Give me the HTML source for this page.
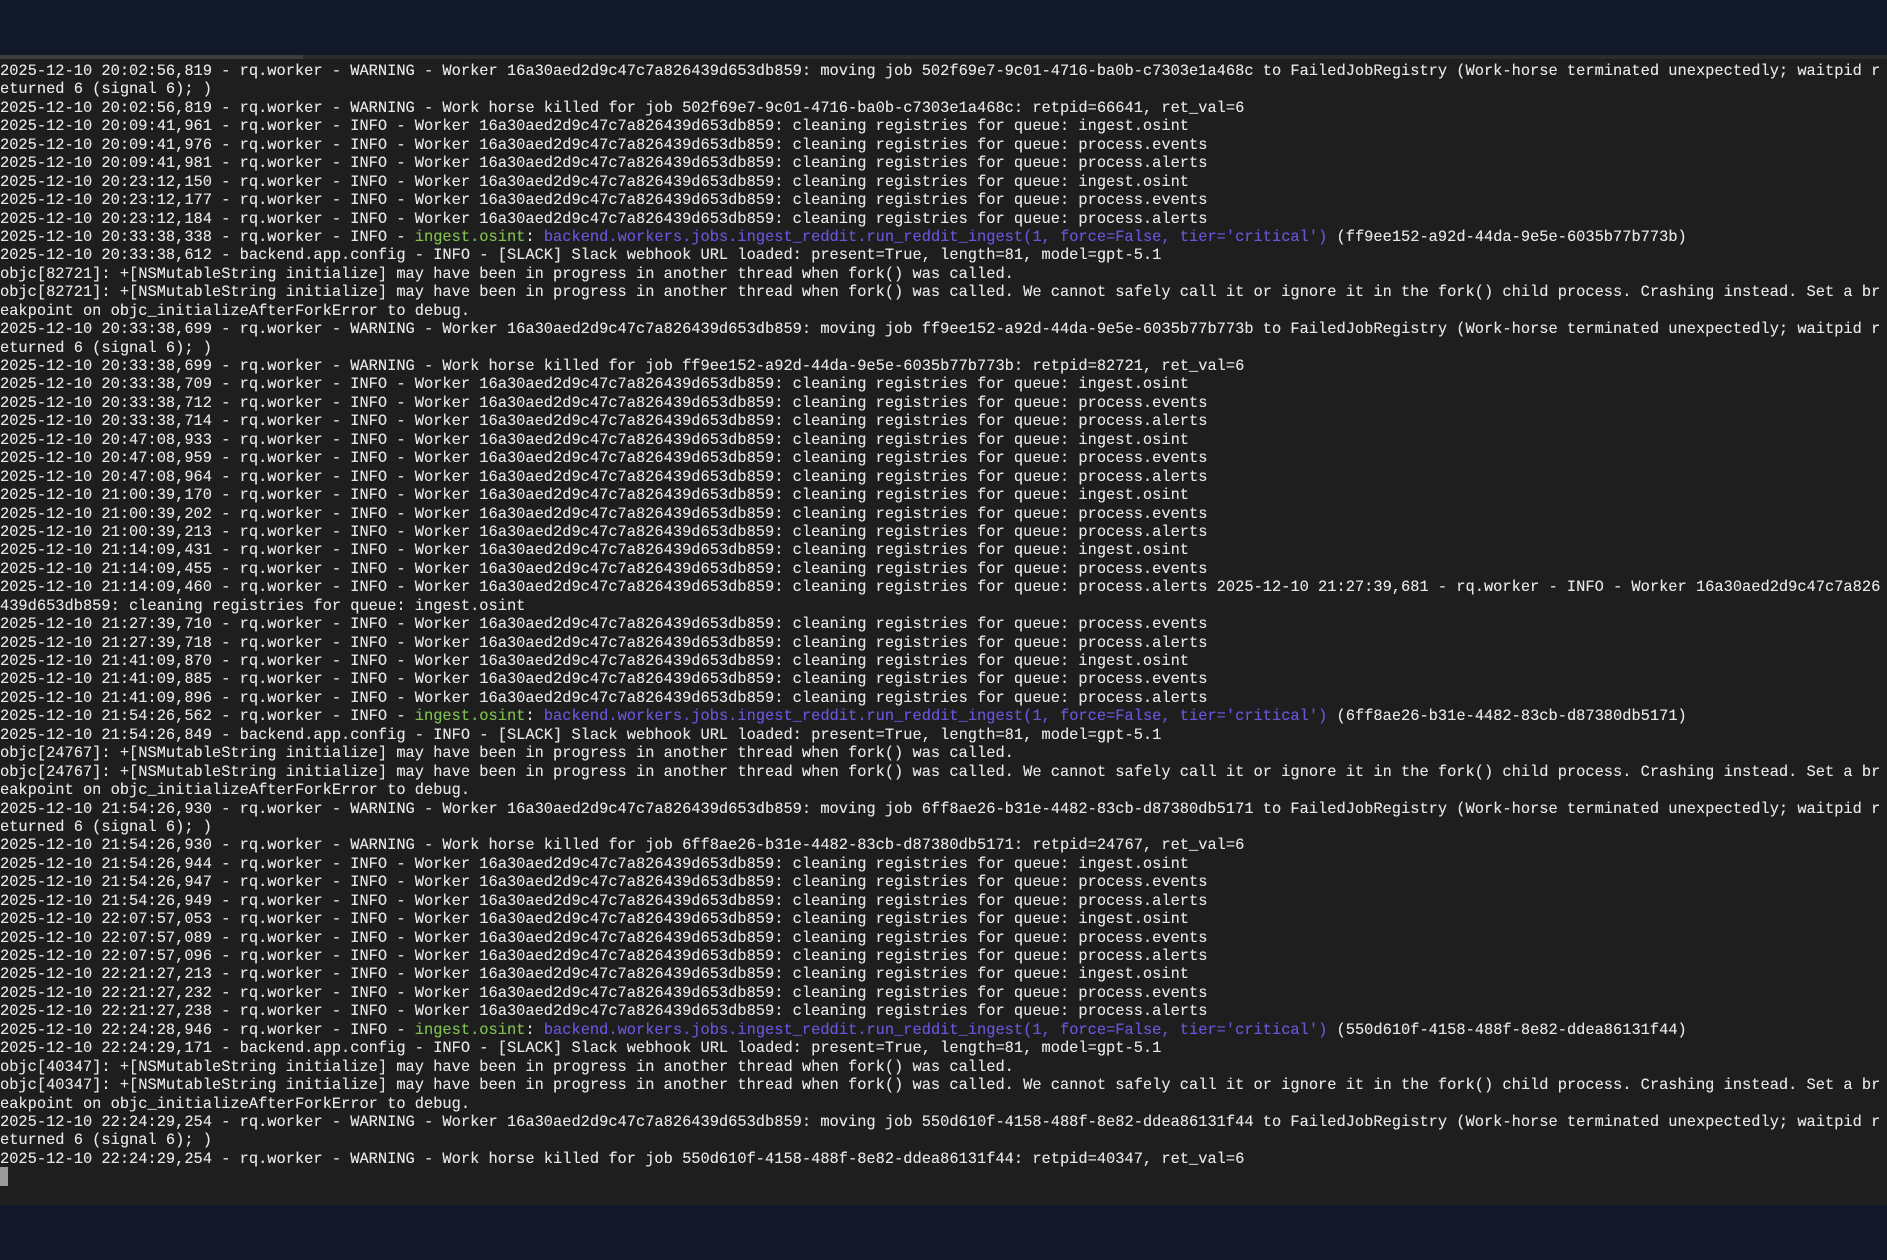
<!DOCTYPE html>
<html><head><meta charset="utf-8"><style>
html,body{margin:0;padding:0;width:1887px;height:1260px;overflow:hidden;background:#121829;}
.top{position:absolute;left:0;top:0;width:1887px;height:55px;background:#121a2a;}
.sb{position:absolute;left:0;top:55px;width:1887px;height:4px;background:#2a2b2e;}
.thumb{position:absolute;left:0;top:55px;width:303px;height:4px;background:#3c3d40;}
.term{position:absolute;left:0;top:59px;width:1887px;height:1146px;background:#1e1e1e;}
pre{position:absolute;left:0;top:62px;margin:0;font-family:"Liberation Mono",monospace;font-size:15.37px;line-height:18.44px;color:#e6e6e6;white-space:pre;text-shadow:0 0 0.3px #e6e6e6;}
.g{color:#7fbf4d;text-shadow:0 0 0.3px #7fbf4d}.p{color:#6655d8;text-shadow:0 0 0.3px #6655d8}
.cur{position:absolute;left:0;top:1167px;width:8px;height:19px;background:#9a9a9a;}
</style></head><body>
<div class="top"></div><div class="term"></div><div class="sb"></div><div class="thumb"></div>
<pre>2025-12-10 20:02:56,819 - rq.worker - WARNING - Worker 16a30aed2d9c47c7a826439d653db859: moving job 502f69e7-9c01-4716-ba0b-c7303e1a468c to FailedJobRegistry (Work-horse terminated unexpectedly; waitpid r
eturned 6 (signal 6); )
2025-12-10 20:02:56,819 - rq.worker - WARNING - Work horse killed for job 502f69e7-9c01-4716-ba0b-c7303e1a468c: retpid=66641, ret_val=6
2025-12-10 20:09:41,961 - rq.worker - INFO - Worker 16a30aed2d9c47c7a826439d653db859: cleaning registries for queue: ingest.osint
2025-12-10 20:09:41,976 - rq.worker - INFO - Worker 16a30aed2d9c47c7a826439d653db859: cleaning registries for queue: process.events
2025-12-10 20:09:41,981 - rq.worker - INFO - Worker 16a30aed2d9c47c7a826439d653db859: cleaning registries for queue: process.alerts
2025-12-10 20:23:12,150 - rq.worker - INFO - Worker 16a30aed2d9c47c7a826439d653db859: cleaning registries for queue: ingest.osint
2025-12-10 20:23:12,177 - rq.worker - INFO - Worker 16a30aed2d9c47c7a826439d653db859: cleaning registries for queue: process.events
2025-12-10 20:23:12,184 - rq.worker - INFO - Worker 16a30aed2d9c47c7a826439d653db859: cleaning registries for queue: process.alerts
2025-12-10 20:33:38,338 - rq.worker - INFO - <span class="g">ingest.osint</span>: <span class="p">backend.workers.jobs.ingest_reddit.run_reddit_ingest(1, force=False, tier='critical')</span> (ff9ee152-a92d-44da-9e5e-6035b77b773b)
2025-12-10 20:33:38,612 - backend.app.config - INFO - [SLACK] Slack webhook URL loaded: present=True, length=81, model=gpt-5.1
objc[82721]: +[NSMutableString initialize] may have been in progress in another thread when fork() was called.
objc[82721]: +[NSMutableString initialize] may have been in progress in another thread when fork() was called. We cannot safely call it or ignore it in the fork() child process. Crashing instead. Set a br
eakpoint on objc_initializeAfterForkError to debug.
2025-12-10 20:33:38,699 - rq.worker - WARNING - Worker 16a30aed2d9c47c7a826439d653db859: moving job ff9ee152-a92d-44da-9e5e-6035b77b773b to FailedJobRegistry (Work-horse terminated unexpectedly; waitpid r
eturned 6 (signal 6); )
2025-12-10 20:33:38,699 - rq.worker - WARNING - Work horse killed for job ff9ee152-a92d-44da-9e5e-6035b77b773b: retpid=82721, ret_val=6
2025-12-10 20:33:38,709 - rq.worker - INFO - Worker 16a30aed2d9c47c7a826439d653db859: cleaning registries for queue: ingest.osint
2025-12-10 20:33:38,712 - rq.worker - INFO - Worker 16a30aed2d9c47c7a826439d653db859: cleaning registries for queue: process.events
2025-12-10 20:33:38,714 - rq.worker - INFO - Worker 16a30aed2d9c47c7a826439d653db859: cleaning registries for queue: process.alerts
2025-12-10 20:47:08,933 - rq.worker - INFO - Worker 16a30aed2d9c47c7a826439d653db859: cleaning registries for queue: ingest.osint
2025-12-10 20:47:08,959 - rq.worker - INFO - Worker 16a30aed2d9c47c7a826439d653db859: cleaning registries for queue: process.events
2025-12-10 20:47:08,964 - rq.worker - INFO - Worker 16a30aed2d9c47c7a826439d653db859: cleaning registries for queue: process.alerts
2025-12-10 21:00:39,170 - rq.worker - INFO - Worker 16a30aed2d9c47c7a826439d653db859: cleaning registries for queue: ingest.osint
2025-12-10 21:00:39,202 - rq.worker - INFO - Worker 16a30aed2d9c47c7a826439d653db859: cleaning registries for queue: process.events
2025-12-10 21:00:39,213 - rq.worker - INFO - Worker 16a30aed2d9c47c7a826439d653db859: cleaning registries for queue: process.alerts
2025-12-10 21:14:09,431 - rq.worker - INFO - Worker 16a30aed2d9c47c7a826439d653db859: cleaning registries for queue: ingest.osint
2025-12-10 21:14:09,455 - rq.worker - INFO - Worker 16a30aed2d9c47c7a826439d653db859: cleaning registries for queue: process.events
2025-12-10 21:14:09,460 - rq.worker - INFO - Worker 16a30aed2d9c47c7a826439d653db859: cleaning registries for queue: process.alerts 2025-12-10 21:27:39,681 - rq.worker - INFO - Worker 16a30aed2d9c47c7a826
439d653db859: cleaning registries for queue: ingest.osint
2025-12-10 21:27:39,710 - rq.worker - INFO - Worker 16a30aed2d9c47c7a826439d653db859: cleaning registries for queue: process.events
2025-12-10 21:27:39,718 - rq.worker - INFO - Worker 16a30aed2d9c47c7a826439d653db859: cleaning registries for queue: process.alerts
2025-12-10 21:41:09,870 - rq.worker - INFO - Worker 16a30aed2d9c47c7a826439d653db859: cleaning registries for queue: ingest.osint
2025-12-10 21:41:09,885 - rq.worker - INFO - Worker 16a30aed2d9c47c7a826439d653db859: cleaning registries for queue: process.events
2025-12-10 21:41:09,896 - rq.worker - INFO - Worker 16a30aed2d9c47c7a826439d653db859: cleaning registries for queue: process.alerts
2025-12-10 21:54:26,562 - rq.worker - INFO - <span class="g">ingest.osint</span>: <span class="p">backend.workers.jobs.ingest_reddit.run_reddit_ingest(1, force=False, tier='critical')</span> (6ff8ae26-b31e-4482-83cb-d87380db5171)
2025-12-10 21:54:26,849 - backend.app.config - INFO - [SLACK] Slack webhook URL loaded: present=True, length=81, model=gpt-5.1
objc[24767]: +[NSMutableString initialize] may have been in progress in another thread when fork() was called.
objc[24767]: +[NSMutableString initialize] may have been in progress in another thread when fork() was called. We cannot safely call it or ignore it in the fork() child process. Crashing instead. Set a br
eakpoint on objc_initializeAfterForkError to debug.
2025-12-10 21:54:26,930 - rq.worker - WARNING - Worker 16a30aed2d9c47c7a826439d653db859: moving job 6ff8ae26-b31e-4482-83cb-d87380db5171 to FailedJobRegistry (Work-horse terminated unexpectedly; waitpid r
eturned 6 (signal 6); )
2025-12-10 21:54:26,930 - rq.worker - WARNING - Work horse killed for job 6ff8ae26-b31e-4482-83cb-d87380db5171: retpid=24767, ret_val=6
2025-12-10 21:54:26,944 - rq.worker - INFO - Worker 16a30aed2d9c47c7a826439d653db859: cleaning registries for queue: ingest.osint
2025-12-10 21:54:26,947 - rq.worker - INFO - Worker 16a30aed2d9c47c7a826439d653db859: cleaning registries for queue: process.events
2025-12-10 21:54:26,949 - rq.worker - INFO - Worker 16a30aed2d9c47c7a826439d653db859: cleaning registries for queue: process.alerts
2025-12-10 22:07:57,053 - rq.worker - INFO - Worker 16a30aed2d9c47c7a826439d653db859: cleaning registries for queue: ingest.osint
2025-12-10 22:07:57,089 - rq.worker - INFO - Worker 16a30aed2d9c47c7a826439d653db859: cleaning registries for queue: process.events
2025-12-10 22:07:57,096 - rq.worker - INFO - Worker 16a30aed2d9c47c7a826439d653db859: cleaning registries for queue: process.alerts
2025-12-10 22:21:27,213 - rq.worker - INFO - Worker 16a30aed2d9c47c7a826439d653db859: cleaning registries for queue: ingest.osint
2025-12-10 22:21:27,232 - rq.worker - INFO - Worker 16a30aed2d9c47c7a826439d653db859: cleaning registries for queue: process.events
2025-12-10 22:21:27,238 - rq.worker - INFO - Worker 16a30aed2d9c47c7a826439d653db859: cleaning registries for queue: process.alerts
2025-12-10 22:24:28,946 - rq.worker - INFO - <span class="g">ingest.osint</span>: <span class="p">backend.workers.jobs.ingest_reddit.run_reddit_ingest(1, force=False, tier='critical')</span> (550d610f-4158-488f-8e82-ddea86131f44)
2025-12-10 22:24:29,171 - backend.app.config - INFO - [SLACK] Slack webhook URL loaded: present=True, length=81, model=gpt-5.1
objc[40347]: +[NSMutableString initialize] may have been in progress in another thread when fork() was called.
objc[40347]: +[NSMutableString initialize] may have been in progress in another thread when fork() was called. We cannot safely call it or ignore it in the fork() child process. Crashing instead. Set a br
eakpoint on objc_initializeAfterForkError to debug.
2025-12-10 22:24:29,254 - rq.worker - WARNING - Worker 16a30aed2d9c47c7a826439d653db859: moving job 550d610f-4158-488f-8e82-ddea86131f44 to FailedJobRegistry (Work-horse terminated unexpectedly; waitpid r
eturned 6 (signal 6); )
2025-12-10 22:24:29,254 - rq.worker - WARNING - Work horse killed for job 550d610f-4158-488f-8e82-ddea86131f44: retpid=40347, ret_val=6</pre>
<div class="cur"></div>
</body></html>
